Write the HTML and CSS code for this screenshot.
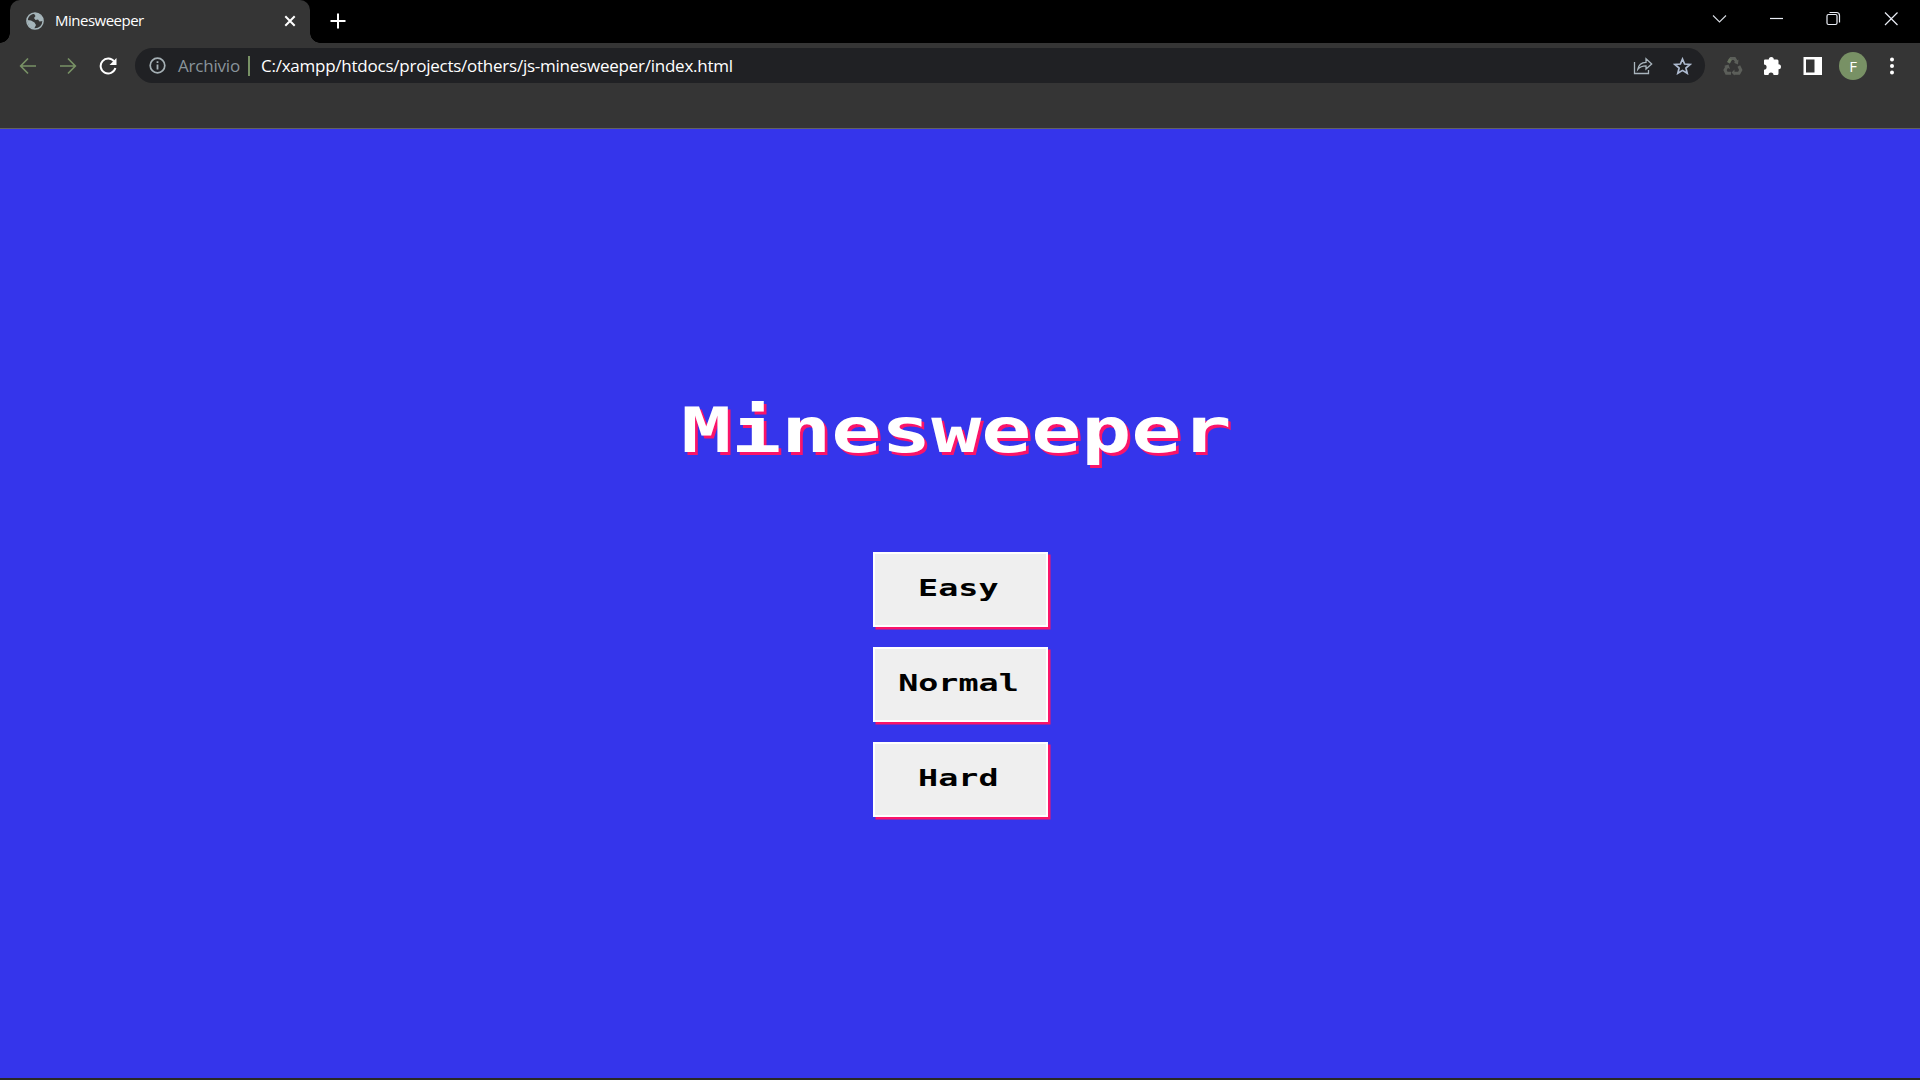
FILE: index.html
```html
<!DOCTYPE html>
<html lang="it">
<head>
<meta charset="utf-8">
<title>Minesweeper</title>
<link rel="stylesheet" href="styles.css">
</head>
<body>
<div class="browser">
  <header class="tabstrip">
    <div class="tab">
      <svg class="globe" width="18" height="18" viewBox="0 0 18 18"><circle cx="9" cy="9" r="8.1" fill="none" stroke="#a5b5ba" stroke-width="1.5"/><path d="M7.5 1 12 1.5 16 5 17 9 13.5 9.500 12 7.500 9.500 8 8 6 9.500 4zM1 8 5 8.500 8.500 10.500 10 13 8 17 3 14.500z" fill="#a5b5ba"/></svg>
      <span class="tab-title">Minesweeper</span>
      <svg class="tab-close" width="12" height="12" viewBox="0 0 12 12"><path d="M1.300 1.300 10.700 10.700M10.700 1.300 1.300 10.700" stroke="#fff" stroke-width="2"/></svg>
    </div>
    <svg class="new-tab" width="16" height="16" viewBox="0 0 16 16"><path d="M8 .5V15.500M.5 8H15.500" stroke="#fff" stroke-width="2"/></svg>
    <div class="window-controls">
      <svg width="58" height="38" viewBox="0 0 58 38"><path class="thin" d="m23 15.500 6.500 6.500 6.500-6.500"/></svg>
      <svg width="57" height="38" viewBox="0 0 57 38"><path d="M22 18.500h13"/></svg>
      <svg width="57" height="38" viewBox="0 0 57 38"><rect x="22" y="14.500" width="10" height="10" rx="1.500"/><path d="M24.500 12.500h7a3 3 0 0 1 3 3v7"/></svg>
      <svg width="58" height="38" viewBox="0 0 58 38"><path d="m23 12.500 12.500 12.500m0-12.500L23 25"/></svg>
    </div>
  </header>
  <nav class="toolbar">
    <div class="nav-buttons">
      <svg width="18" height="18" viewBox="0 0 18 18"><path d="M17 9H2M9 1.500 1.700 9 9 16.500" fill="none" stroke="#789165" stroke-width="1.700"/></svg>
      <svg width="18" height="18" viewBox="0 0 18 18"><path d="M1 9H16M9 1.500 16.300 9 9 16.500" fill="none" stroke="#789165" stroke-width="1.700"/></svg>
      <svg width="18" height="18" viewBox="0 0 18 18"><path d="M15.200 4.500A7.500 7.500 0 1 0 16.400 11" fill="none" stroke="#fff" stroke-width="2"/><path d="M17.500 1v7h-7z" fill="#fff"/></svg>
    </div>
    <div class="omnibox">
      <svg class="info" width="17" height="17" viewBox="0 0 17 17"><circle cx="8.500" cy="8.500" r="7.300" fill="none" stroke="#a5b0b5" stroke-width="1.700"/><path d="M8.500 7.500v5M8.500 4.200v1.900" stroke="#a5b0b5" stroke-width="1.800"/></svg>
      <span class="scheme">Archivio</span>
      <span class="divider"></span>
      <span class="url">C:/xampp/htdocs/projects/others/js-minesweeper/index.html</span>
      <svg class="share" width="20" height="18" viewBox="0 0 20 18"><path d="M1.500 5v11.500h14V13M4.800 12.300C5.500 8 8 5.500 13 5.300V1.800L18.700 7 13 12V8.800c-3.700 0-6.200 1-8.200 3.500z" fill="none" stroke="#a9b5bd" stroke-width="1.300"/></svg>
      <svg class="star" width="19" height="18" viewBox="0 0 19 18"><path d="m9.500 2 2.100 5 5.400.5-4.100 3.500 1.300 5.300-4.700-2.900-4.700 2.900L6.100 11 2 7.500 7.400 7z" fill="none" stroke="#aebbd0" stroke-width="1.700"/></svg>
    </div>
    <div class="actions">
      <svg width="20" height="20" viewBox="0 0 20 20"><g fill="none" stroke-width="3"><path d="M5.500 7 8 2.500h3.500L14 6.500M15.800 10l2 4-1.800 3.200h-5M8 17.200H3.500L2 14 4.300 10" stroke="#5c5f5a"/><path d="m5.500 6.500 2-3.500" stroke="#68735f"/></g><path d="m15.500 3.500-.5 5-4-1.700zM11.500 13.500v6l-3-3zM1 10l4.500-1.500L7 13z" fill="#5c5f5a"/></svg>
      <svg width="20" height="20" viewBox="0 0 20 20"><path d="M1 4.500Q1 3.500 2 3.500H5.800A2.500 2.500 0 0 1 10.800 3.500H14.200Q15.500 3.500 15.500 5V8.300A2.500 2.500 0 0 1 15.500 13.300V17.500Q15.500 19 14 19H10.500A2.500 2.500 0 0 0 5.500 19H2Q1 19 1 18V13.700A2.600 2.600 0 0 0 1 8.500z" fill="#fff"/></svg>
      <svg width="20" height="20" viewBox="0 0 20 20"><path fill-rule="evenodd" d="M.5 1H19v18H.5zM3 3.500v13h8.500v-13z" fill="#fff"/></svg>
      <span class="avatar">F</span>
      <svg class="menu" width="6" height="18" viewBox="0 0 6 18"><g fill="#fff"><circle cx="3" cy="2.500" r="2"/><circle cx="3" cy="9" r="2"/><circle cx="3" cy="15.500" r="2"/></g></svg>
    </div>
  </nav>
  <main class="page">
    <h1 class="title"><span class="wide">Minesweeper</span></h1>
    <div class="levels">
      <button class="level"><span class="wide">Easy</span></button>
      <button class="level"><span class="wide">Normal</span></button>
      <button class="level"><span class="wide">Hard</span></button>
    </div>
  </main>
</div>
</body>
</html>
```
FILE: styles.css
```css
* { box-sizing: border-box; }
body { margin: 0; background: #252525; font-family: "Open Sans", "Noto Sans", sans-serif; }
svg { display: block; flex: none; }
.browser { width: 1920px; height: 1080px; display: flex; flex-direction: column; overflow: hidden; border-bottom: 2px solid #292925; }
.tabstrip { height: 43px; flex: none; display: flex; align-items: flex-start; background: #000; padding-left: 10px; }
.tab { position: relative; width: 300px; height: 43px; background: #353535; border-radius: 10px 10px 0 0; display: flex; align-items: center; padding: 0 14px 1px 16px; }
.tab::before, .tab::after { content: ""; position: absolute; bottom: 0; width: 10px; height: 10px; }
.tab::before { left: -10px; background: radial-gradient(circle at 0 0, #000 9.5px, #353535 10px); }
.tab::after { right: -10px; background: radial-gradient(circle at 100% 0, #000 9.5px, #353535 10px); }
.tab-title { margin-left: 11px; padding-bottom: 2px; color: #fff; font-size: 15px; letter-spacing: -0.5px; white-space: nowrap; }
.tab-close { margin-left: auto; }
.new-tab { margin: 13px 0 0 19.5px; }
.window-controls { margin-left: auto; display: flex; }
.window-controls path, .window-controls rect { fill: none; stroke: #e9edf5; stroke-width: 1.2; }
.window-controls .thin { stroke: #d5d9e0; stroke-width: 1.1; }
.toolbar { height: 86px; flex: none; display: flex; align-items: flex-start; background: #353535; border-bottom: 1px solid #626262; padding-top: 5px; }
.nav-buttons { height: 35px; width: 135px; padding-left: 19px; display: flex; align-items: center; gap: 22px; }
.omnibox { width: 1570px; height: 35px; border-radius: 18px; background: #202124; display: flex; align-items: center; padding: 0 13px 0 14px; font-size: 17px; white-space: nowrap; }
.scheme { margin-left: 12px; width: 62px; color: #89949b; letter-spacing: -0.2px; }
.divider { width: 2px; height: 20px; margin: 0 11px 0 8px; background: #789165; }
.url { color: #fff; letter-spacing: -0.24px; }
.share { margin-left: auto; }
.star { margin-left: 20px; }
.actions { height: 35px; margin-left: 18px; display: flex; align-items: center; gap: 20px; }
.avatar { width: 28px; height: 28px; margin-left: -4px; border-radius: 50%; background: #789165; color: #fff; font-size: 15px; display: flex; align-items: center; justify-content: center; }
.menu { margin-left: 2px; }
.page { flex: 1; background: #3535eb; display: flex; flex-direction: column; align-items: center; padding-top: 265px; }
.title, .level { font-family: "DejaVu Sans Mono", monospace; font-weight: bold; }
.wide { display: inline-block; }
.title { margin: 0 0 84px; padding-right: 7px; height: 74px; color: #fff; font-size: 62px; line-height: 74px; text-shadow: 2px 3px 0 #fa1469; }
.title .wide { transform: scaleX(1.34); }
.levels { display: flex; flex-direction: column; gap: 20px; }
.level { width: 175px; height: 75px; padding: 0 4px 3px 0; border: 2px solid #fff; background: #efefef; box-shadow: 2.5px 2.5px 0 #fa1469; color: #000; font-size: 23.5px; }
.level .wide { transform: scaleX(1.42); }
```
